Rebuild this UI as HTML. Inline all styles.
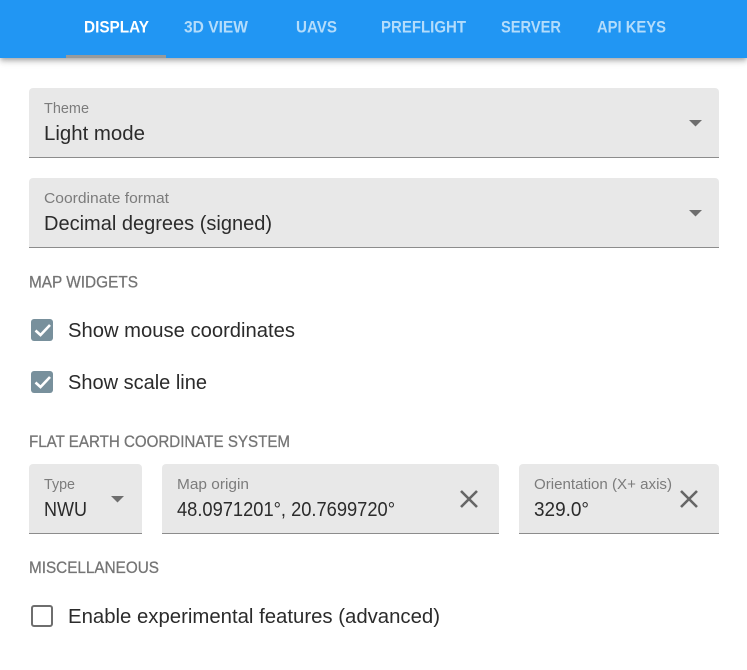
<!DOCTYPE html>
<html lang="en"><head><meta charset="utf-8"><title>Settings</title>
<style>
html,body{margin:0;padding:0;width:747px;height:670px;overflow:hidden;background:#fff}
.bar{position:absolute;left:0;top:0;width:747px;height:58px;background:#2196f3;box-shadow:0 2px 4px -1px rgba(0,0,0,.2),0 4px 5px rgba(0,0,0,.14),0 1px 10px rgba(0,0,0,.12)}
.ind{position:absolute;left:66px;top:55px;width:100px;height:3px;background:#969a9c}
.f{position:absolute;background:#e8e8e8;border-radius:4px 4px 0 0;border-bottom:1px solid #8c8c8c;box-sizing:border-box}
svg{position:absolute;left:0;top:0}
text{font-family:"Liberation Sans",sans-serif}
.t{font-size:17px;font-weight:700}
.h{font-size:17px;fill:#757575;stroke:#757575;stroke-width:.3}
.l{font-size:14.5px;fill:#7c7c7c}
.v{font-size:20px;fill:#2b2b2b}
</style></head><body>
<div class="bar"></div><div class="ind"></div>
<div class="f" style="left:29px;top:88px;width:690px;height:70px"></div>
<div class="f" style="left:29px;top:178px;width:690px;height:70px"></div>
<div class="f" style="left:29px;top:464px;width:113px;height:70px"></div>
<div class="f" style="left:162px;top:464px;width:337px;height:70px"></div>
<div class="f" style="left:519px;top:464px;width:200px;height:70px"></div>
<svg width="747" height="670" viewBox="0 0 747 670">
<text class="t" x="84" y="32.500" fill="#fff" textLength="65" lengthAdjust="spacingAndGlyphs">DISPLAY</text>
<text class="t" x="184" y="32.500" fill="#b3dcfb" textLength="64" lengthAdjust="spacingAndGlyphs">3D VIEW</text>
<text class="t" x="296" y="32.500" fill="#b3dcfb" textLength="41" lengthAdjust="spacingAndGlyphs">UAVS</text>
<text class="t" x="381" y="32.500" fill="#b3dcfb" textLength="85" lengthAdjust="spacingAndGlyphs">PREFLIGHT</text>
<text class="t" x="501" y="32.500" fill="#b3dcfb" textLength="60" lengthAdjust="spacingAndGlyphs">SERVER</text>
<text class="t" x="597" y="32.500" fill="#b3dcfb" textLength="69" lengthAdjust="spacingAndGlyphs">API KEYS</text>
<text class="l" x="44" y="113" textLength="45" lengthAdjust="spacingAndGlyphs">Theme</text>
<text class="v" x="44" y="140" textLength="101" lengthAdjust="spacingAndGlyphs">Light mode</text>
<text class="l" x="44" y="203" textLength="125" lengthAdjust="spacingAndGlyphs">Coordinate format</text>
<text class="v" x="44" y="230" textLength="228" lengthAdjust="spacingAndGlyphs">Decimal degrees (signed)</text>
<path d="M689 120h13l-6.500 6.500z" fill="#6e6e6e"/>
<path d="M689 210h13l-6.500 6.500z" fill="#6e6e6e"/>
<text class="h" x="29" y="287.500" textLength="109" lengthAdjust="spacingAndGlyphs">MAP WIDGETS</text>
<rect x="31" y="319" width="22" height="22" rx="3" fill="#78909c"/>
<path d="M35.500 330.500l5 4.500 9.500-10" fill="none" stroke="#fff" stroke-width="2.600"/>
<text class="v" x="68" y="337" textLength="227" lengthAdjust="spacingAndGlyphs">Show mouse coordinates</text>
<rect x="31" y="371" width="22" height="22" rx="3" fill="#78909c"/>
<path d="M35.500 382.500l5 4.500 9.500-10" fill="none" stroke="#fff" stroke-width="2.600"/>
<text class="v" x="68" y="389" textLength="139" lengthAdjust="spacingAndGlyphs">Show scale line</text>
<text class="h" x="29" y="447" textLength="261" lengthAdjust="spacingAndGlyphs">FLAT EARTH COORDINATE SYSTEM</text>
<text class="l" x="44" y="489" textLength="31" lengthAdjust="spacingAndGlyphs">Type</text>
<text class="v" x="44" y="516" textLength="43" lengthAdjust="spacingAndGlyphs">NWU</text>
<path d="M111 496h13l-6.500 6.500z" fill="#6e6e6e"/>
<text class="l" x="177" y="489" textLength="72" lengthAdjust="spacingAndGlyphs">Map origin</text>
<text class="v" x="177" y="516" textLength="218" lengthAdjust="spacingAndGlyphs">48.0971201°, 20.7699720°</text>
<path d="M461 491l16 16M477 491l-16 16" stroke="#666" stroke-width="2.600" fill="none"/>
<text class="l" x="534" y="489" textLength="138" lengthAdjust="spacingAndGlyphs">Orientation (X+ axis)</text>
<text class="v" x="534" y="516" textLength="55" lengthAdjust="spacingAndGlyphs">329.0°</text>
<path d="M681 491l16 16M697 491l-16 16" stroke="#666" stroke-width="2.600" fill="none"/>
<text class="h" x="29" y="573" textLength="130" lengthAdjust="spacingAndGlyphs">MISCELLANEOUS</text>
<rect x="32" y="606" width="20" height="20" rx="2" fill="none" stroke="#6e6e6e" stroke-width="2"/>
<text class="v" x="68" y="623" textLength="372" lengthAdjust="spacingAndGlyphs">Enable experimental features (advanced)</text>
</svg>
</body></html>
